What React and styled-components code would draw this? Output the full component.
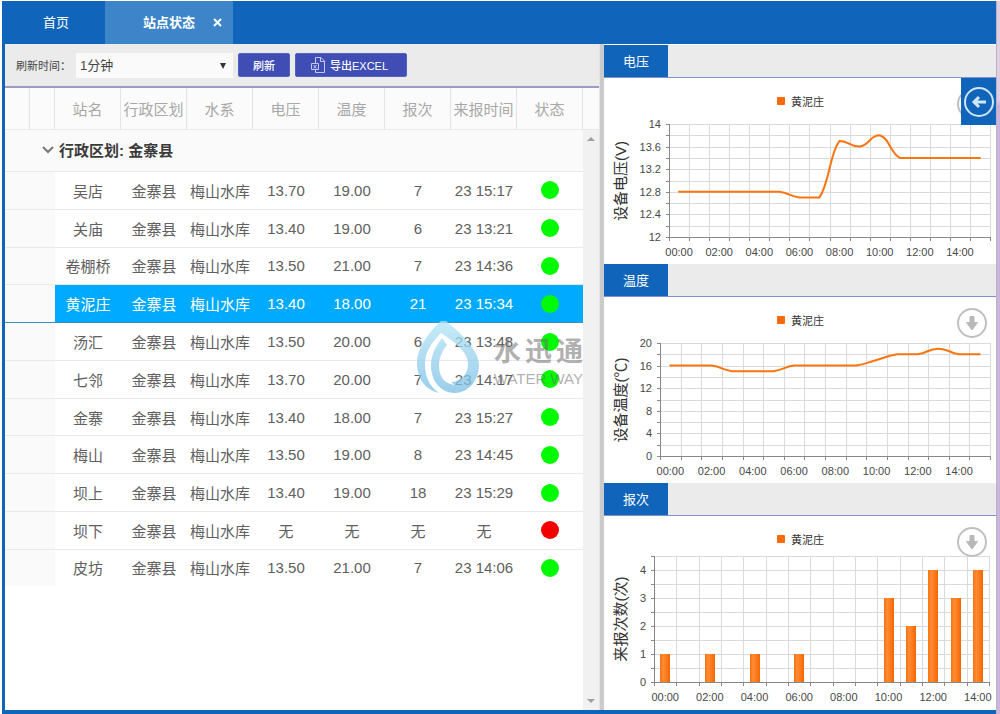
import React, { useState } from 'react';
import styled, { createGlobalStyle } from 'styled-components';

const BLUE = '#1065bb';
const LINE = '#e9e9e9';
const FONT = '"Liberation Sans", "Noto Sans CJK SC", sans-serif';

const GlobalStyle = createGlobalStyle`
  *, *::before, *::after { box-sizing: border-box; }
  body { margin: 0; background: #fff; font-family: ${FONT}; color: #606060; }
  button, select { font-family: inherit; }
`;

const Page = styled.div`
  display: grid;
  grid-template-columns: minmax(0, 1fr) 4px;
  min-height: 100vh;
  padding: 1px 0 0 2px;
`;

const Edge = styled.div`
  border-left: 1px solid #b9b3c4;
  background: linear-gradient(#decfe2 98px, #cbb5dc 104px);
`;

const Frame = styled.div`
  display: flex;
  flex-direction: column;
  border-left: 3px solid ${BLUE};
  border-bottom: 4px solid ${BLUE};
`;

const TopBar = styled.nav`
  display: flex;
  height: 43px;
  margin-left: -3px;
  background: ${BLUE};
`;

const TopTab = styled.div`
  display: flex;
  align-items: center;
  justify-content: center;
  position: relative;
  width: ${(p) => (p.$active ? 128 : 103)}px;
  padding-left: ${(p) => (p.$active ? 0 : 5)}px;
  background: ${(p) => (p.$active ? '#3d85c8' : 'transparent')};
`;

const TopLink = styled.a`
  padding-bottom: 2px;
  color: #fff;
  font-size: 13px;
  font-weight: ${(p) => (p.$active ? 700 : 400)};
  text-decoration: none;
`;

const CloseButton = styled.button`
  display: flex;
  position: absolute;
  right: 11px;
  padding: 0;
  border: 0;
  background: none;
  color: #fff;
`;

const Content = styled.div`
  display: flex;
  flex: 1;
`;

const LeftPane = styled.main`
  display: flex;
  flex: 1;
  flex-direction: column;
  min-width: 0;
`;

const Splitter = styled.div`
  width: 5px;
  border-left: 1px solid #e4e4e4;
  background: #cbcbcb;
`;

const RightPane = styled.aside`
  position: relative;
  width: 392px;
  padding-top: 1px;
`;

const Toolbar = styled.div`
  display: flex;
  align-items: center;
  gap: 5px;
  height: 44px;
  padding: 0 11px;
  border-bottom: 2px solid #9c9cc4;
  background: #ebebeb;
`;

const ToolLabel = styled.label`
  color: #444;
  font-size: 11px;
`;

const SelectBox = styled.div`
  display: flex;
  align-items: center;
  position: relative;
`;

const Select = styled.select`
  appearance: none;
  width: 157px;
  height: 25px;
  padding: 0 4px;
  border: 0;
  background: #fafafa;
  color: #444;
  font-size: 13px;
`;

const SelectArrow = styled.svg`
  position: absolute;
  right: 7px;
  pointer-events: none;
`;

const ToolButton = styled.button`
  display: flex;
  align-items: center;
  justify-content: center;
  gap: 4px;
  height: 24px;
  padding: ${(p) => (p.$wide ? '0 18px 0 14px' : '0 14px')};
  border: 1px solid #5262c0;
  border-radius: 2px;
  background: #3f4db5;
  color: #fff;
  font-size: 11px;
  font-weight: 500;
  white-space: nowrap;
`;

const Table = styled.table`
  width: 100%;
  height: ${(p) => p.$height || 'auto'};
  border-collapse: separate;
  border-spacing: 0;
  table-layout: fixed;
  font-size: 15px;
  text-align: center;
  white-space: nowrap;
`;

const HeadCell = styled.th`
  height: 42px;
  padding: 0;
  border-right: 1px solid #e3e3ea;
  border-bottom: 1px solid ${LINE};
  background: #fbfbfb;
  color: #a8a8a8;
  font-weight: 400;
  &:last-child { border-right: 0; }
`;

const BodyArea = styled.div`
  display: flex;
  flex: 1;
  align-items: stretch;
`;

const TableWrap = styled.div`
  position: relative;
  flex: 1;
  min-width: 0;
`;

const GroupCell = styled.td`
  height: 42px;
  padding: 0 0 2px 37px;
  border-bottom: 1px solid ${LINE};
  background: #fafafa;
  text-align: left;
`;

const GroupButton = styled.button`
  display: flex;
  align-items: center;
  gap: 5px;
  padding: 0;
  border: 0;
  background: none;
  color: #3a3a3a;
  font-size: 15px;
  font-weight: 700;
`;

const Row = styled.tr`
  color: ${(p) => (p.$selected ? '#fff' : '#606060')};
  td { border-bottom: 1px solid ${(p) => (p.$selected ? '#3591bd' : LINE)}; }
  td + td { background: ${(p) => (p.$selected ? '#00aaff' : '#fff')}; }
  &:last-child td { border-bottom: 0; }
`;

const Cell = styled.td`
  padding: 0;
`;

const IndentCell = styled.td`
  padding: 0;
  background: #fafafa;
`;

const Dot = styled.span`
  display: block;
  width: 18px;
  height: 18px;
  margin: 0 auto;
  border-radius: 50%;
  background: ${(p) => (p.$ok ? '#00fa00' : '#f50000')};
`;

const ScrollTrack = styled.div`
  display: flex;
  flex-direction: column;
  align-items: center;
  justify-content: space-between;
  width: 16px;
  padding: 6px 0;
  background: #f1f1f1;
`;

const Watermark = styled.div`
  display: flex;
  align-items: flex-end;
  gap: 15px;
  position: absolute;
  top: 190px;
  right: 0;
  pointer-events: none;
`;

const WatermarkText = styled.div`
  padding-bottom: 6px;
  color: rgba(110, 110, 110, 0.55);
  font-size: 15px;
  line-height: 18px;
  white-space: nowrap;
`;

const WatermarkName = styled.div`
  display: flex;
  justify-content: space-between;
  font-size: 27px;
  font-weight: 700;
  line-height: 36px;
`;

const PanelHead = styled.div`
  display: flex;
  height: 33px;
  border-bottom: 1px solid #7f8fd0;
  background: #ebebeb;
`;

const PanelTitle = styled.h2`
  display: flex;
  align-items: center;
  justify-content: center;
  width: 64px;
  margin: 0;
  padding-bottom: 2px;
  background: ${BLUE};
  color: #fff;
  font-size: 13px;
  font-weight: 400;
`;

const PanelBody = styled.div`
  position: relative;
`;

const ChartSvg = styled.svg`
  display: block;
  width: 100%;
  font-family: ${FONT};
`;

const AxisLabel = styled.text`
  fill: #484848;
  font-size: 11px;
`;

const LegendLabel = styled.text`
  fill: #333;
  font-size: 11px;
`;

const AxisTitle = styled.text`
  fill: #333;
  font-size: 15px;
  text-anchor: middle;
`;

const SaveButton = styled.button`
  display: flex;
  position: absolute;
  top: 11px;
  right: 9px;
  padding: 0;
  border: 0;
  background: none;
`;

const BackButton = styled.button`
  display: flex;
  align-items: center;
  justify-content: center;
  position: absolute;
  top: 34px;
  right: 0;
  width: 35px;
  height: 47px;
  padding: 0;
  border: 0;
  background: ${BLUE};
`;

const COLUMNS = ['站名', '行政区划', '水系', '电压', '温度', '报次', '来报时间', '状态'];

const STATIONS = [
  ['吴店', '13.70', '19.00', '7', '23 15:17'],
  ['关庙', '13.40', '19.00', '6', '23 13:21'],
  ['卷棚桥', '13.50', '21.00', '7', '23 14:36'],
  ['黄泥庄', '13.40', '18.00', '21', '23 15:34'],
  ['汤汇', '13.50', '20.00', '6', '23 13:48'],
  ['七邻', '13.70', '20.00', '7', '23 14:17'],
  ['金寨', '13.40', '18.00', '7', '23 15:27'],
  ['梅山', '13.50', '19.00', '8', '23 14:45'],
  ['坝上', '13.40', '19.00', '18', '23 15:29'],
  ['坝下', '无', '无', '无', '无'],
  ['皮坊', '13.50', '21.00', '7', '23 14:06'],
];

const CHARTS = [
  {
    title: '电压', axis: '设备电压(V)', type: 'line', height: 186,
    left: 65, right: 386, top: 46, bottom: 159, min: 12, max: 14, step: 0.2,
    labels: [12, 12.4, 12.8, 13.2, 13.6, 14],
    data: [12.8, 12.8, 12.8, 12.8, 12.8, 12.8, 12.7, 12.7, 13.7, 13.6, 13.8, 13.4, 13.4, 13.4, 13.4, 13.4],
  },
  {
    title: '温度', axis: '设备温度(℃)', type: 'line', height: 186,
    left: 56, right: 386, top: 46, bottom: 159, min: 0, max: 20, step: 2,
    labels: [0, 4, 8, 12, 16, 20],
    data: [16, 16, 16, 15, 15, 15, 16, 16, 16, 16, 17, 18, 18, 19, 18, 18],
  },
  {
    title: '报次', axis: '来报次数(次)', type: 'bar', height: 193,
    left: 50, right: 385, top: 40, bottom: 166, min: 0, max: 4.5, step: 0.5,
    labels: [0, 1, 2, 3, 4],
    data: [1, 0, 1, 0, 1, 0, 1, 0, 0, 0, 3, 2, 4, 3, 4],
  },
];

const clamp = (v, a, b) => Math.max(Math.min(a, b), Math.min(Math.max(a, b), v));

function smoothPath(pts) {
  const slope = pts.map((p, i) => {
    const a = pts[i - 1] || p;
    const b = pts[i + 1] || p;
    return { x: (b.x - a.x) * 0.25, y: (b.y - a.y) * 0.25 };
  });
  return pts.slice(1).reduce((d, q, i) => {
    const p = pts[i];
    const y1 = clamp(p.y + slope[i].y, p.y, q.y);
    const y2 = clamp(q.y - slope[i + 1].y, p.y, q.y);
    return `${d} C${p.x + slope[i].x} ${y1} ${q.x - slope[i + 1].x} ${y2} ${q.x} ${q.y}`;
  }, `M${pts[0].x} ${pts[0].y}`);
}

function Chart({ chart }) {
  const { left, right, top, bottom, min, max, step, data } = chart;
  const band = (right - left) / data.length;
  const yOf = (v) => bottom - ((v - min) / (max - min)) * (bottom - top);
  const rows = Array.from({ length: Math.round((max - min) / step) + 1 }, (_, i) => Math.round(yOf(min + i * step)) + 0.5);
  const cols = Array.from({ length: data.length + 1 }, (_, i) => Math.round(left + i * band) + 0.5);
  const pts = data.map((v, i) => ({ x: left + (i + 0.5) * band, y: yOf(v) }));
  return (
    <ChartSvg viewBox={`0 0 392 ${chart.height}`} role="img" aria-label={chart.axis}>
      <defs>
        <linearGradient id="bar">
          <stop offset="0" stopColor="#f57510" />
          <stop offset="0.35" stopColor="#ff8a35" />
          <stop offset="1" stopColor="#f56600" />
        </linearGradient>
      </defs>
      <rect x="173" y="19" width="8" height="8" rx="1" fill="#f96a0a" />
      <LegendLabel x="187" y="28">黄泥庄</LegendLabel>
      {rows.map((y) => <line key={y} x1={left} x2={right} y1={y} y2={y} stroke="#dadada" />)}
      {cols.map((x) => <line key={x} x1={x} x2={x} y1={top} y2={bottom} stroke="#dadada" />)}
      {rows.map((y) => <line key={y} x1={left - 3} x2={left} y1={y} y2={y} stroke="#888" />)}
      {cols.map((x) => <line key={x} x1={x} x2={x} y1={bottom} y2={bottom + 4} stroke="#888" />)}
      <path d={`M${left + 0.5} ${top}V${bottom + 0.5}H${right}`} fill="none" stroke="#888" />
      {chart.labels.map((v) => (
        <AxisLabel key={v} x={left - 8} y={yOf(v) + 4} textAnchor="end">{v}</AxisLabel>
      ))}
      {data.map((_, i) => i % 2 === 0 && (
        <AxisLabel key={i} x={pts[i].x} y={bottom + 19} textAnchor="middle">
          {`${String(i).padStart(2, '0')}:00`}
        </AxisLabel>
      ))}
      <AxisTitle transform="translate(22 103) rotate(-90)">{chart.axis}</AxisTitle>
      {chart.type === 'line' && <path d={smoothPath(pts)} fill="none" stroke="#fa7410" strokeWidth="2" strokeLinecap="round" />}
      {chart.type === 'bar' && data.map((v, i) => v > 0 && (
        <rect key={i} x={Math.round(pts[i].x) - 5} y={Math.round(pts[i].y)} width="10" height={bottom - Math.round(pts[i].y)} fill="url(#bar)" />
      ))}
    </ChartSvg>
  );
}

function SaveIcon() {
  return (
    <svg width="30" height="30" viewBox="0 0 30 30" fill="none">
      <circle cx="15" cy="15" r="14" fill="#fff" stroke="#bfbfbf" strokeWidth="2" />
      <path d="M13 8.5h4v6h3.5L15 22l-5.500-7.500H13z" fill="#b8b8b8" stroke="#b8b8b8" strokeLinejoin="round" />
    </svg>
  );
}

function Columns() {
  return (
    <colgroup>
      <col style={{ width: 25 }} />
      <col style={{ width: 25 }} />
      {COLUMNS.map((c) => <col key={c} />)}
    </colgroup>
  );
}

function DropLogo() {
  return (
    <svg width="62" height="74" viewBox="0 0 62 74" fill="none">
      <defs>
        <linearGradient id="drop" x1="0" y1="0" x2="0" y2="74" gradientUnits="userSpaceOnUse">
          <stop offset="0" stopColor="#b4e6f5" />
          <stop offset="1" stopColor="#78bde6" />
        </linearGradient>
      </defs>
      <g fill="url(#drop)" fillOpacity="0.75">
        <path d="M24 1C12 12 0 28 0 43c0 16 9 27 22 30C12 66 8 56 8 44c0-12 7-22 16-31z" />
        <path d="M24 1h5c13 11 33 28 33 44 0 17-12 28-24 28-14 0-24-12-24-27 0-12 5-20 11-28l5 7c-5 6-8 13-8 21 0 10 5 18 16 19l-4-3c10 0 17-8 17-18 0-12-13-22-27-31z" />
      </g>
    </svg>
  );
}

export default function App() {
  const [selected, setSelected] = useState('黄泥庄');
  const [open, setOpen] = useState(true);
  return (
    <Page>
      <GlobalStyle />
      <Frame>
        <TopBar>
          <TopTab><TopLink href="#home">首页</TopLink></TopTab>
          <TopTab $active>
            <TopLink $active href="#status">站点状态</TopLink>
            <CloseButton aria-label="关闭">
              <svg width="9" height="9" viewBox="0 0 9 9" stroke="currentColor" strokeWidth="2"><path d="M1 1l7 7M8 1L1 8" /></svg>
            </CloseButton>
          </TopTab>
        </TopBar>
        <Content>
          <LeftPane>
            <Toolbar>
              <ToolLabel htmlFor="interval">刷新时间：</ToolLabel>
              <SelectBox>
                <Select id="interval" defaultValue="1">
                  <option value="1">1分钟</option>
                  <option value="5">5分钟</option>
                </Select>
                <SelectArrow width="6" height="7" viewBox="0 0 6 7"><path d="M0 1h6L3 7z" fill="#333" /></SelectArrow>
              </SelectBox>
              <ToolButton>刷新</ToolButton>
              <ToolButton $wide>
                <svg width="16" height="16" viewBox="0 0 16 16" fill="none" stroke="#c3c9f0">
                  <path d="M5.500 6V.5H11L14.500 4v11.500h-9V13M10.500 .5v4h4" />
                  <path d="M1.500 6.500h7v6h-7zM3.500 8l3 3.500M6.500 8l-3 3.500" />
                </svg>
                导出EXCEL
              </ToolButton>
            </Toolbar>
            <Table>
              <colgroup>
                <col style={{ width: 25 }} />
                <col style={{ width: 25 }} />
                {COLUMNS.map((c) => <col key={c} />)}
                <col style={{ width: 16 }} />
              </colgroup>
              <thead>
                <tr>
                  <HeadCell />
                  <HeadCell />
                  {COLUMNS.map((c) => <HeadCell key={c} scope="col">{c}</HeadCell>)}
                  <HeadCell />
                </tr>
              </thead>
            </Table>
            <BodyArea>
              <TableWrap>
                <Table $height={open ? '456px' : 'auto'}>
                  <Columns />
                  <tbody>
                    <tr>
                      <GroupCell colSpan={10}>
                        <GroupButton aria-expanded={open} onClick={() => setOpen(!open)}>
                          <svg width="12" height="8" viewBox="0 0 12 8" fill="none" stroke="#777" strokeWidth="2"><path d="M1 1l5 5 5-5" /></svg>
                          行政区划: 金寨县
                        </GroupButton>
                      </GroupCell>
                    </tr>
                    {open && STATIONS.map(([name, volt, temp, count, time]) => (
                      <Row key={name} $selected={name === selected} onClick={() => setSelected(name)}>
                        <IndentCell colSpan={2} />
                        <Cell>{name}</Cell>
                        <Cell>金寨县</Cell>
                        <Cell>梅山水库</Cell>
                        <Cell>{volt}</Cell>
                        <Cell>{temp}</Cell>
                        <Cell>{count}</Cell>
                        <Cell>{time}</Cell>
                        <Cell><Dot $ok={volt !== '无'} /></Cell>
                      </Row>
                    ))}
                  </tbody>
                </Table>
                <Watermark>
                  <DropLogo />
                  <WatermarkText>
                    <WatermarkName><span>水</span><span>迅</span><span>通</span></WatermarkName>
                    WATER WAY
                  </WatermarkText>
                </Watermark>
              </TableWrap>
              <ScrollTrack>
                <svg width="8" height="5" viewBox="0 0 8 5"><path d="M0 5l4-4 4 4z" fill="#a0a0a0" /></svg>
                <svg width="8" height="5" viewBox="0 0 8 5"><path d="M0 0l4 4 4-4z" fill="#a0a0a0" /></svg>
              </ScrollTrack>
            </BodyArea>
          </LeftPane>
          <Splitter />
          <RightPane>
            {CHARTS.map((chart) => (
              <section key={chart.title}>
                <PanelHead><PanelTitle>{chart.title}</PanelTitle></PanelHead>
                <PanelBody>
                  <Chart chart={chart} />
                  <SaveButton aria-label="保存图片"><SaveIcon /></SaveButton>
                </PanelBody>
              </section>
            ))}
            <BackButton aria-label="返回">
              <svg width="30" height="32" viewBox="0 0 30 32" fill="none" stroke="#cfe6fb">
                <circle cx="15" cy="16" r="14" strokeWidth="2" />
                <path d="M22 16H10M15 11l-5 5 5 5" strokeWidth="3" />
              </svg>
            </BackButton>
          </RightPane>
        </Content>
      </Frame>
      <Edge />
    </Page>
  );
}
